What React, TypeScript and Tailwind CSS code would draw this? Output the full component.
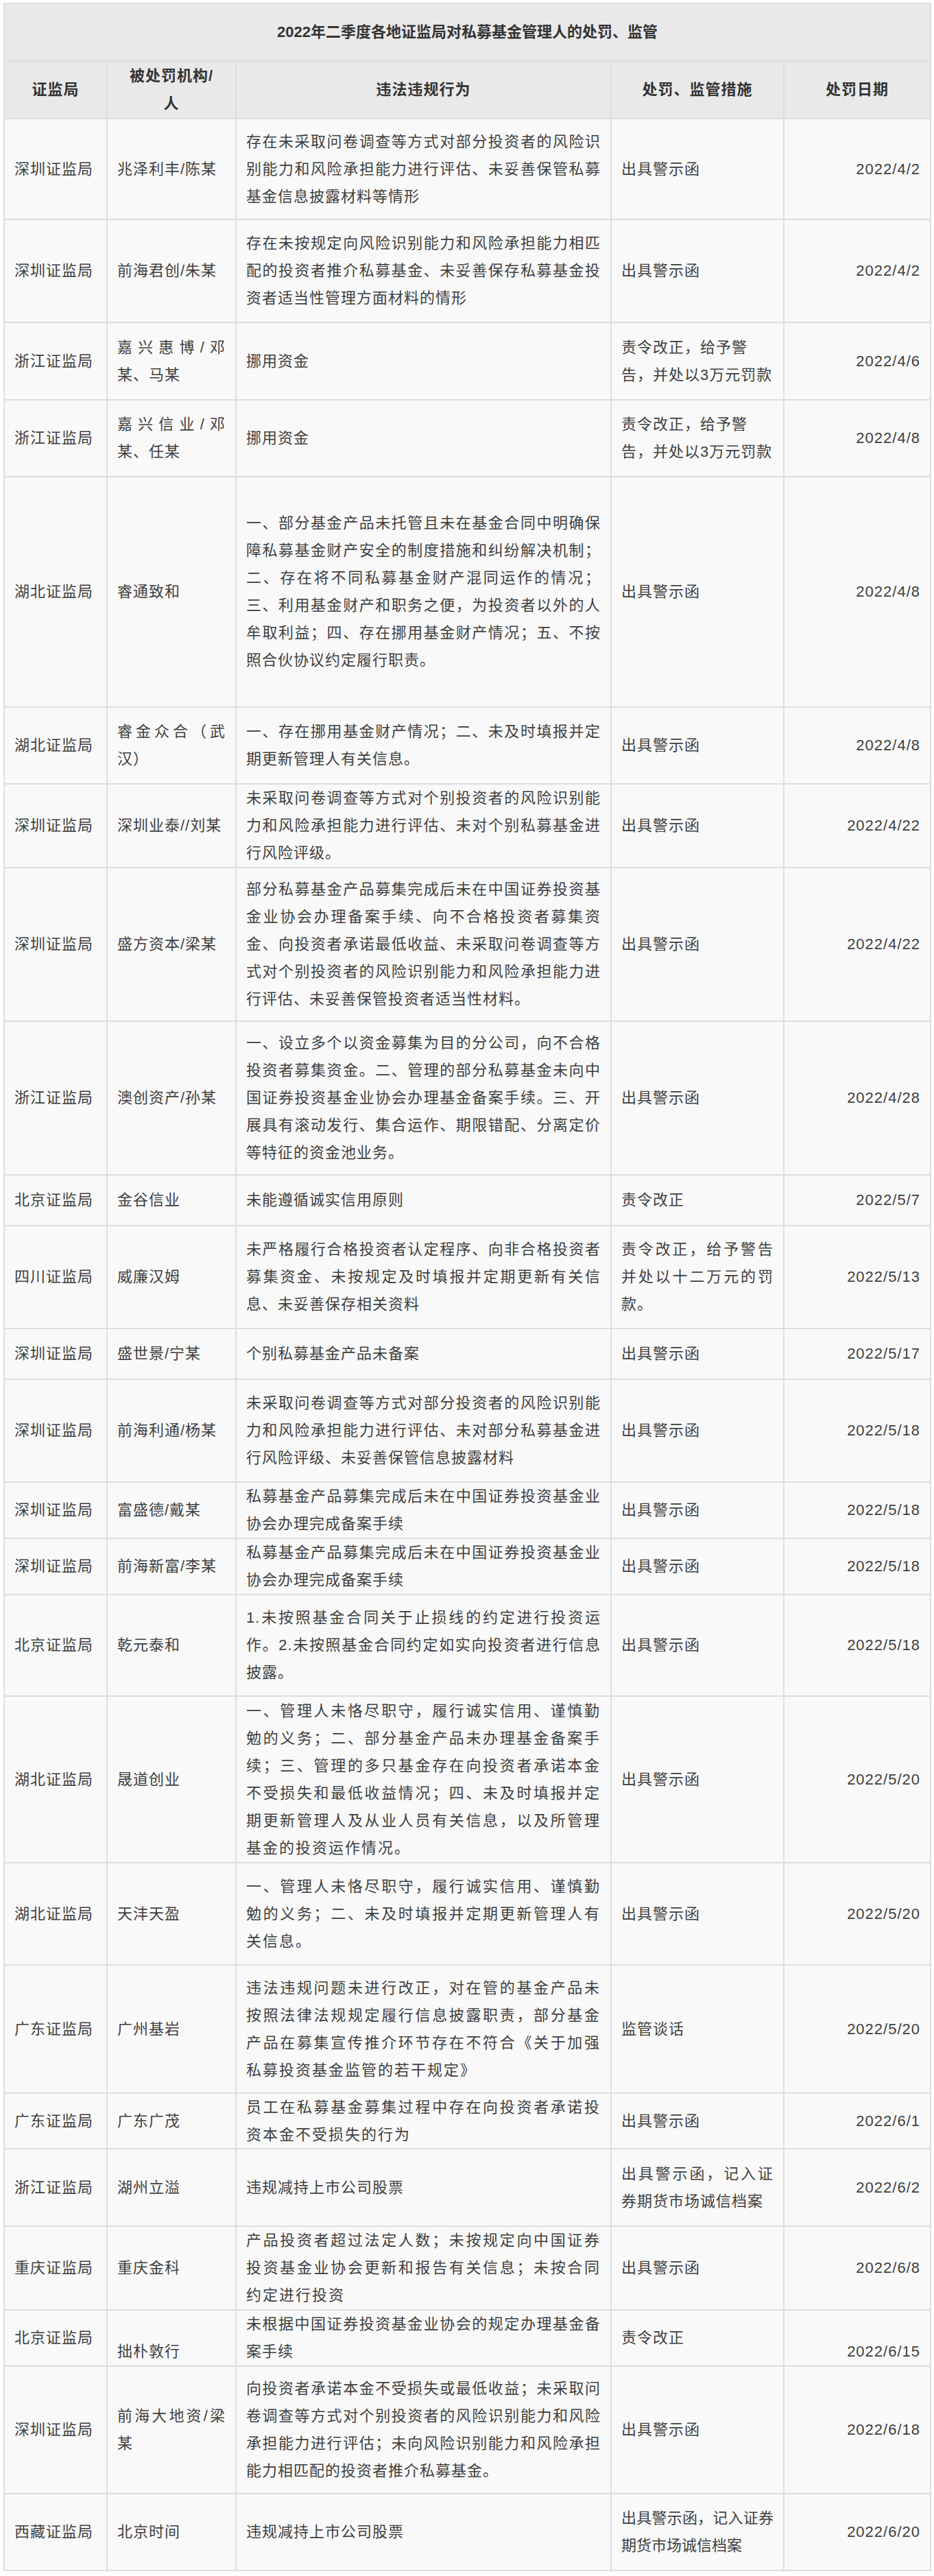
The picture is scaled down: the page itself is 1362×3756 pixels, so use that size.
import React from "react";

type Row = {
  c: [string, string, string, string, string];
  h: number;
  wide3?: boolean;
  left4?: boolean;
  tight4?: boolean;
  bottom25?: boolean;
};

const rows: Row[] = [
  { h: 147, c: ["深圳证监局", "兆泽利丰/陈某", "存在未采取问卷调查等方式对部分投资者的风险识别能力和风险承担能力进行评估、未妥善保管私募基金信息披露材料等情形", "出具警示函", "2022/4/2"] },
  { h: 150, c: ["深圳证监局", "前海君创/朱某", "存在未按规定向风险识别能力和风险承担能力相匹配的投资者推介私募基金、未妥善保存私募基金投资者适当性管理方面材料的情形", "出具警示函", "2022/4/2"] },
  { h: 113, left4: true, c: ["浙江证监局", "嘉兴惠博/邓某、马某", "挪用资金", "责令改正，给予警告，并处以3万元罚款", "2022/4/6"] },
  { h: 112, left4: true, c: ["浙江证监局", "嘉兴信业/邓某、任某", "挪用资金", "责令改正，给予警告，并处以3万元罚款", "2022/4/8"] },
  { h: 336, c: ["湖北证监局", "睿通致和", "一、部分基金产品未托管且未在基金合同中明确保障私募基金财产安全的制度措施和纠纷解决机制；二、存在将不同私募基金财产混同运作的情况；三、利用基金财产和职务之便，为投资者以外的人牟取利益；四、存在挪用基金财产情况；五、不按照合伙协议约定履行职责。", "出具警示函", "2022/4/8"] },
  { h: 112, c: ["湖北证监局", "睿金众合（武汉）", "一、存在挪用基金财产情况；二、未及时填报并定期更新管理人有关信息。", "出具警示函", "2022/4/8"] },
  { h: 122, c: ["深圳证监局", "深圳业泰//刘某", "未采取问卷调查等方式对个别投资者的风险识别能力和风险承担能力进行评估、未对个别私募基金进行风险评级。", "出具警示函", "2022/4/22"] },
  { h: 224, c: ["深圳证监局", "盛方资本/梁某", "部分私募基金产品募集完成后未在中国证券投资基金业协会办理备案手续、向不合格投资者募集资金、向投资者承诺最低收益、未采取问卷调查等方式对个别投资者的风险识别能力和风险承担能力进行评估、未妥善保管投资者适当性材料。", "出具警示函", "2022/4/22"] },
  { h: 224, c: ["浙江证监局", "澳创资产/孙某", "一、设立多个以资金募集为目的分公司，向不合格投资者募集资金。二、管理的部分私募基金未向中国证券投资基金业协会办理基金备案手续。三、开展具有滚动发行、集合运作、期限错配、分离定价等特征的资金池业务。", "出具警示函", "2022/4/28"] },
  { h: 74, c: ["北京证监局", "金谷信业", "未能遵循诚实信用原则", "责令改正", "2022/5/7"] },
  { h: 150, c: ["四川证监局", "威廉汉姆", "未严格履行合格投资者认定程序、向非合格投资者募集资金、未按规定及时填报并定期更新有关信息、未妥善保存相关资料", "责令改正，给予警告并处以十二万元的罚款。", "2022/5/13"] },
  { h: 74, c: ["深圳证监局", "盛世景/宁某", "个别私募基金产品未备案", "出具警示函", "2022/5/17"] },
  { h: 150, c: ["深圳证监局", "前海利通/杨某", "未采取问卷调查等方式对部分投资者的风险识别能力和风险承担能力进行评估、未对部分私募基金进行风险评级、未妥善保管信息披露材料", "出具警示函", "2022/5/18"] },
  { h: 82, c: ["深圳证监局", "富盛德/戴某", "私募基金产品募集完成后未在中国证券投资基金业协会办理完成备案手续", "出具警示函", "2022/5/18"] },
  { h: 82, c: ["深圳证监局", "前海新富/李某", "私募基金产品募集完成后未在中国证券投资基金业协会办理完成备案手续", "出具警示函", "2022/5/18"] },
  { h: 148, c: ["北京证监局", "乾元泰和", "1.未按照基金合同关于止损线的约定进行投资运作。2.未按照基金合同约定如实向投资者进行信息披露。", "出具警示函", "2022/5/18"] },
  { h: 243, wide3: true, c: ["湖北证监局", "晟道创业", "一、管理人未恪尽职守，履行诚实信用、谨慎勤勉的义务；二、部分基金产品未办理基金备案手续；三、管理的多只基金存在向投资者承诺本金不受损失和最低收益情况；四、未及时填报并定期更新管理人及从业人员有关信息，以及所管理基金的投资运作情况。", "出具警示函", "2022/5/20"] },
  { h: 149, wide3: true, c: ["湖北证监局", "天沣天盈", "一、管理人未恪尽职守，履行诚实信用、谨慎勤勉的义务；二、未及时填报并定期更新管理人有关信息。", "出具警示函", "2022/5/20"] },
  { h: 187, wide3: true, c: ["广东证监局", "广州基岩", "违法违规问题未进行改正，对在管的基金产品未按照法律法规规定履行信息披露职责，部分基金产品在募集宣传推介环节存在不符合《关于加强私募投资基金监管的若干规定》", "监管谈话", "2022/5/20"] },
  { h: 81, wide3: true, c: ["广东证监局", "广东广茂", "员工在私募基金募集过程中存在向投资者承诺投资本金不受损失的行为", "出具警示函", "2022/6/1"] },
  { h: 113, c: ["浙江证监局", "湖州立溢", "违规减持上市公司股票", "出具警示函，记入证券期货市场诚信档案", "2022/6/2"] },
  { h: 122, wide3: true, c: ["重庆证监局", "重庆金科", "产品投资者超过法定人数；未按规定向中国证券投资基金业协会更新和报告有关信息；未按合同约定进行投资", "出具警示函", "2022/6/8"] },
  { h: 82, bottom25: true, c: ["北京证监局", "拙朴敦行", "未根据中国证券投资基金业协会的规定办理基金备案手续", "责令改正", "2022/6/15"] },
  { h: 186, c: ["深圳证监局", "前海大地资/梁某", "向投资者承诺本金不受损失或最低收益；未采取问卷调查等方式对个别投资者的风险识别能力和风险承担能力进行评估；未向风险识别能力和风险承担能力相匹配的投资者推介私募基金。", "出具警示函", "2022/6/18"] },
  { h: 112, tight4: true, c: ["西藏证监局", "北京时间", "违规减持上市公司股票", "出具警示函，记入证券期货市场诚信档案", "2022/6/20"] },
];

const cellBase = "flex border-l-2 border-t-2 border-[#dedede] px-[14px]";

function Cell({
  children,
  valign = "center",
  className = "",
}: {
  children: React.ReactNode;
  valign?: "center" | "end";
  className?: string;
}) {
  return (
    <div className={`${cellBase} ${valign === "end" ? "items-end" : "items-center"}`}>
      <div className={`w-full ${className}`}>{children}</div>
    </div>
  );
}

export default function App() {
  return (
    <div className="min-h-[3756px] bg-white pt-[4px] pl-[5px] font-['Liberation_Sans','Noto_Sans_CJK_SC',sans-serif] text-[22px] leading-[40px] tracking-[1px] text-[#3f3f3f] [text-spacing-trim:space-all]">
      <div className="w-[1353px] border-r-2 border-b-2 border-[#dedede]">
        {/* title */}
        <div className="flex h-[84px] items-center justify-center border-l-2 border-t-2 border-[#dedede] bg-[#e9e9e9] font-bold tracking-normal text-[#333333]">
          2022年二季度各地证监局对私募基金管理人的处罚、监管
        </div>
        {/* header */}
        <div className="grid h-[84px] grid-cols-[150px_188px_547px_252px_214px] bg-[#e9e9e9] font-bold text-[#333333]">
          <Cell className="text-center">证监局</Cell>
          <Cell className="text-center">
            被处罚机构/
            <br />人
          </Cell>
          <Cell className="text-center">违法违规行为</Cell>
          <Cell className="text-center">处罚、监管措施</Cell>
          <Cell className="text-center">处罚日期</Cell>
        </div>
        {rows.map((r, i) => (
          <div
            key={i}
            className="grid grid-cols-[150px_188px_547px_252px_214px] bg-[#f9f9f9]"
            style={{ height: r.h }}
          >
            <Cell className="text-left">{r.c[0]}</Cell>
            <Cell valign={r.bottom25 ? "end" : "center"} className="text-justify">
              {r.c[1]}
            </Cell>
            <Cell className={r.wide3 ? "text-justify tracking-[2px]" : "text-justify"}>{r.c[2]}</Cell>
            <Cell
              className={
                r.left4 ? "text-left" : r.tight4 ? "text-justify tracking-normal" : "text-justify"
              }
            >
              {r.c[3]}
            </Cell>
            <Cell valign={r.bottom25 ? "end" : "center"} className="text-right">
              {r.c[4]}
            </Cell>
          </div>
        ))}
      </div>
    </div>
  );
}
